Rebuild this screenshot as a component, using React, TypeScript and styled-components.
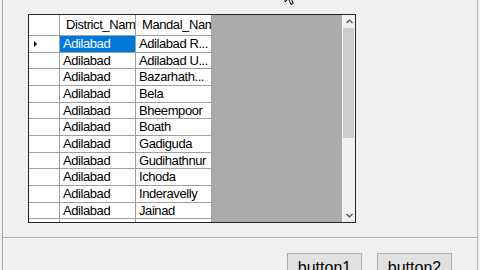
import React from "react";
import styled, { createGlobalStyle } from "styled-components";

const Global = createGlobalStyle`
  html, body { margin: 0; padding: 0; background: #f0f0f0; }
  body { font-family: "Liberation Sans", Arial, sans-serif; }
`;

const Page = styled.div`
  position: relative;
  width: 480px;
  height: 270px;
  overflow: hidden;
  box-sizing: border-box;
  padding: 0 2px;
  background: #f0f0f0;
`;

const Panel = styled.div`
  height: 100%;
  box-sizing: border-box;
  border-left: 1px solid #a9a9a9;
  border-right: 1px solid #b4b4b4;
  display: flex;
  flex-direction: column;
  overflow: hidden;
`;

const TopArea = styled.div`
  flex: none;
  height: 237px;
  box-sizing: border-box;
  padding: 14px 0 0 25px;
`;

const Divider = styled.div`
  flex: none;
  height: 1px;
  background: #a8a8a8;
  border-bottom: 1px solid #fbfbfb;
`;

const ButtonBar = styled.div`
  flex: none;
  display: flex;
  align-items: flex-start;
  justify-content: flex-end;
  gap: 15px;
  padding: 14px 25px 0 0;
`;

const WinButton = styled.button`
  flex: none;
  width: 75px;
  height: 30px;
  box-sizing: border-box;
  border: 1px solid #adadad;
  background: #e1e1e1;
  color: #000;
  font-family: "Liberation Sans", Arial, sans-serif;
  font-size: 16px;
  line-height: 18px;
  padding: 0;
  margin: 0;
`;

const GridBox = styled.div`
  width: 328px;
  height: 209px;
  box-sizing: border-box;
  border: 1px solid #262626;
  display: flex;
  overflow: hidden;
  background: #ababab;
`;

const Table = styled.div`
  width: 183px;
  flex: none;
  display: flex;
  flex-direction: column;
  background: #fff;
  overflow: hidden;
`;

const Row = styled.div<{ $header?: boolean }>`
  display: flex;
  flex: none;
  height: ${(p) => (p.$header ? "21px" : "16.67px")};
  box-sizing: border-box;
  border-bottom: 1px solid #a0a0a0;
`;

const RowHead = styled.div`
  width: 31px;
  flex: none;
  box-sizing: border-box;
  border-right: 1px solid #a0a0a0;
  display: flex;
  align-items: center;
  padding-left: 5px;
  background: #fff;
`;

const Indicator = styled.span`
  width: 0;
  height: 0;
  border-top: 3px solid transparent;
  border-bottom: 3px solid transparent;
  border-left: 3px solid #000;
`;

const Cell = styled.div<{ $selected?: boolean; $header?: boolean; $pad?: number }>`
  width: 76px;
  flex: none;
  box-sizing: border-box;
  border-right: 1px solid #a0a0a0;
  padding-left: ${(p) => p.$pad ?? 3}px;
  font-size: 13px;
  letter-spacing: -0.42px;
  line-height: ${(p) => (p.$header ? "20px" : "16px")};
  white-space: nowrap;
  overflow: hidden;
  color: ${(p) => (p.$selected ? "#f4faff" : "#000")};
  background: ${(p) => (p.$selected ? "#0078d7" : "#fff")};
`;

const GreyArea = styled.div`
  flex: 1;
  background: #ababab;
`;

const ScrollBar = styled.div`
  width: 13px;
  flex: none;
  background: #f0f0f0;
  display: flex;
  flex-direction: column;
  border-left: 1px solid #f7f7f7;
  box-sizing: border-box;
`;

const ArrowBtn = styled.div`
  height: 13px;
  flex: none;
  display: flex;
  align-items: center;
  justify-content: center;
`;

const Thumb = styled.div`
  height: 110px;
  flex: none;
  margin: 0 1px 0 0;
  background: #cdcdcd;
`;

const Track = styled.div`
  flex: 1;
`;

const Cursor = styled.svg`
  position: absolute;
  left: 284px;
  top: -13px;
`;

const rows: Array<[string, string]> = [
  ["Adilabad", "Adilabad R..."],
  ["Adilabad", "Adilabad U..."],
  ["Adilabad", "Bazarhath..."],
  ["Adilabad", "Bela"],
  ["Adilabad", "Bheempoor"],
  ["Adilabad", "Boath"],
  ["Adilabad", "Gadiguda"],
  ["Adilabad", "Gudihathnur"],
  ["Adilabad", "Ichoda"],
  ["Adilabad", "Inderavelly"],
  ["Adilabad", "Jainad"],
  ["", ""],
];

const Chevron = ({ up }: { up?: boolean }) => (
  <svg width="7" height="5" viewBox="0 0 7 5">
    <polyline
      points={up ? "0.5,4 3.5,1 6.5,4" : "0.5,1 3.5,4 6.5,1"}
      fill="none"
      stroke="#505050"
      strokeWidth="1.2"
    />
  </svg>
);

export default function App() {
  return (
    <>
      <Global />
      <Page>
        <Panel>
          <TopArea>
            <GridBox>
              <Table>
                <Row $header>
                  <RowHead />
                  <Cell $header $pad={6}>District_Name</Cell>
                  <Cell $header $pad={6}>Mandal_Name</Cell>
                </Row>
                {rows.map(([d, m], i) => (
                  <Row key={i}>
                    <RowHead>{i === 0 && <Indicator />}</RowHead>
                    <Cell $selected={i === 0}>{d}</Cell>
                    <Cell>{m}</Cell>
                  </Row>
                ))}
              </Table>
              <GreyArea />
              <ScrollBar>
                <ArrowBtn>
                  <Chevron up />
                </ArrowBtn>
                <Thumb />
                <Track />
                <ArrowBtn>
                  <Chevron />
                </ArrowBtn>
              </ScrollBar>
            </GridBox>
          </TopArea>
          <Divider />
          <ButtonBar>
            <WinButton>button1</WinButton>
            <WinButton>button2</WinButton>
          </ButtonBar>
        </Panel>
        <Cursor width="13" height="20" viewBox="0 0 13 20">
          <path
            d="M1 1 L1 15 L4.5 11.5 L7 17.5 L9.3 16.5 L6.8 10.8 L11.5 10.8 Z"
            fill="#fff"
            stroke="#000"
            strokeWidth="1"
          />
        </Cursor>
      </Page>
    </>
  );
}
